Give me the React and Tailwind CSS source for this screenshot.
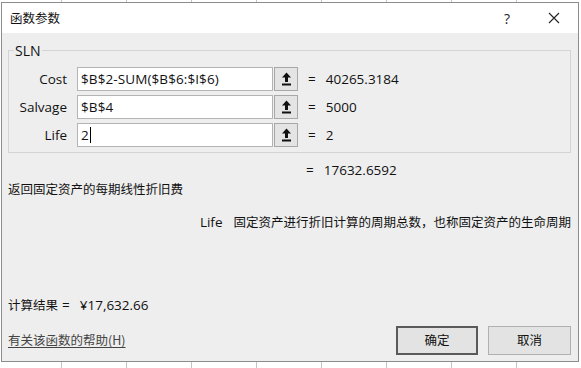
import React from "react";

function RefIcon() {
  return (
    <svg width="11" height="14" viewBox="0 0 11 14">
      <polygon points="5.5,0.5 10,5.5 1,5.5" fill="#111" />
      <rect x="4" y="5" width="3" height="5" fill="#111" />
      <rect x="1" y="11.5" width="9" height="2" fill="#111" />
    </svg>
  );
}

function Row({ label, value, result }) {
  return (
    <div className="flex items-center h-[24px]">
      <div className="w-[58px] text-right text-[13.5px] text-[#111]">{label}</div>
      <div className="ml-[10px] w-[196px] h-[24px] bg-white border border-[#b4b4b4] flex items-center pl-[3px] text-[13.5px] text-[#111] tracking-[0.1px]">
        {value}
      </div>
      <div className="ml-[1px] w-[24px] h-[24px] bg-[#e4e4e4] border border-[#a8a8a8] flex items-center justify-center">
        <RefIcon />
      </div>
      <div className="ml-[10px] text-[13.5px] text-[#111]">=</div>
      <div className="ml-[10px] text-[13.5px] text-[#111]">{result}</div>
    </div>
  );
}

export default function App() {
  return (
    <div className="w-[581px] h-[368px] overflow-hidden bg-white bg-[repeating-linear-gradient(90deg,transparent_0px,transparent_61px,#c4c4c4_61px,#c4c4c4_62px,transparent_62px,transparent_65px)] pt-[2px] font-['Open_Sans','Noto_Sans_CJK_SC',sans-serif]">
      <div className="ml-[1px] w-[578px] h-[360px] border border-[#8c8c8c] bg-[#eeeeee] flex flex-col">
        <div className="h-[30px] bg-white flex items-center shrink-0">
          <div className="ml-[8px] text-[12.5px] text-[#111] font-['Noto_Sans_CJK_SC',sans-serif]">函数参数</div>
          <div className="ml-auto mr-[37px] text-[14px] text-[#222]">?</div>
          <div className="mr-[17px] w-[14px] h-[14px] flex items-center justify-center">
            <svg width="12" height="12" viewBox="0 0 12 12">
              <path d="M1 1 L11 11 M11 1 L1 11" stroke="#222" strokeWidth="1.1" />
            </svg>
          </div>
        </div>
        <div className="flex flex-col pl-[6px] pr-[7px] flex-1">
          <fieldset className="mt-[8px] border border-[#d4d4d4] pb-[5px]">
            <legend className="ml-[5px] px-[1px] text-[14px] text-[#111] leading-[19px]">SLN</legend>
            <div className="flex flex-col gap-[4px] mt-[7px]">
              <Row label="Cost" value="$B$2-SUM($B$6:$I$6)" result="40265.3184" />
              <Row label="Salvage" value="$B$4" result="5000" />
              <Row
                label="Life"
                value={
                  <span className="flex items-center">
                    2<span className="inline-block w-[1px] h-[16px] bg-black ml-[1px]" />
                  </span>
                }
                result="2"
              />
            </div>
          </fieldset>
          <div className="mt-[8px] h-[18px] flex items-center text-[13.5px] text-[#111]">
            <span className="ml-[298px]">=</span>
            <span className="ml-[10px]">17632.6592</span>
          </div>
          <div className="mt-[1px] h-[18px] flex items-center text-[12.5px] text-[#111] font-['Noto_Sans_CJK_SC',sans-serif]">
            返回固定资产的每期线性折旧费
          </div>
          <div className="mt-[15px] h-[18px] flex items-center justify-end text-[12.5px] text-[#111]">
            <span className="text-[13.5px] mr-[11px]">Life</span>
            <span className="font-['Noto_Sans_CJK_SC',sans-serif]">固定资产进行折旧计算的周期总数，也称固定资产的生命周期</span>
          </div>
          <div className="mt-[65px] h-[18px] flex items-center text-[12.5px] text-[#111]">
            <span className="font-['Noto_Sans_CJK_SC',sans-serif]">计算结果</span>
            <span className="ml-[4px] text-[13.5px]">=</span>
            <span className="ml-[10px] text-[13.5px]">¥17,632.66</span>
          </div>
          <div className="mt-[12px] flex items-center">
            <div className="text-[12.5px] text-[#444] underline underline-offset-2 font-['Noto_Sans_CJK_SC',sans-serif]">有关该函数的帮助(H)</div>
            <div className="ml-auto w-[82px] h-[29px] bg-[#e3e3e3] border-2 border-[#5a5a5a] flex items-center justify-center text-[12.5px] text-[#111] font-['Noto_Sans_CJK_SC',sans-serif]">
              确定
            </div>
            <div className="ml-[10px] w-[83px] h-[29px] bg-[#e3e3e3] border border-[#b0b0b0] flex items-center justify-center text-[12.5px] text-[#111] font-['Noto_Sans_CJK_SC',sans-serif]">
              取消
            </div>
          </div>
        </div>
      </div>
    </div>
  );
}
